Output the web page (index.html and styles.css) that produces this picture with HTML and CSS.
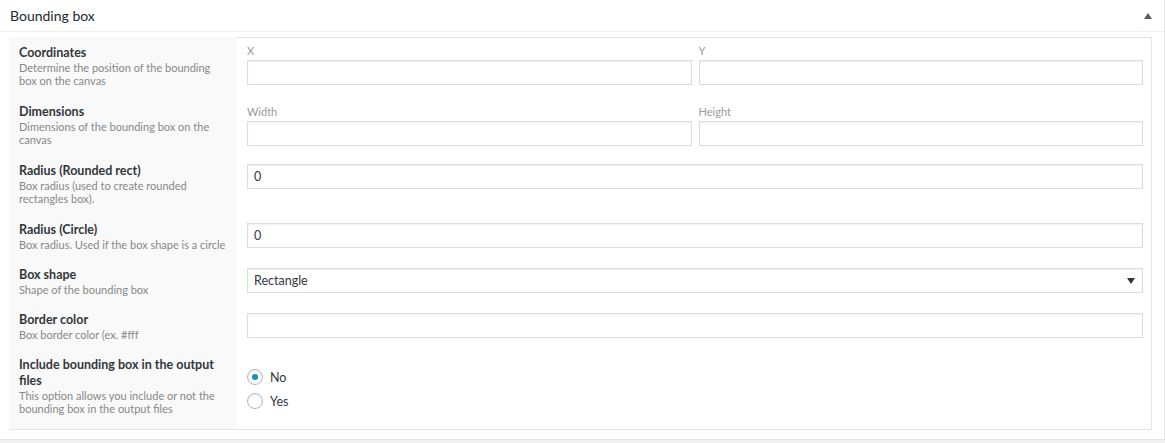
FILE: index.html
```html
<!DOCTYPE html>
<html lang="en">
<head>
    <meta charset="UTF-8">
    <title>Bounding box</title>
    <link rel="stylesheet" href="styles.css">
</head>
<body>
    <div class="postbox">
        <div class="postbox_header">
            <h2>Bounding box</h2>
            <span class="toggle_arrow"></span>
        </div>
        <div class="inside">
            <div class="settings">
                <div class="row tall">
                    <div class="row_label">
                        <div class="title">Coordinates</div>
                        <div class="desc">Determine the position of the bounding box on the canvas</div>
                    </div>
                    <div class="row_field">
                        <div class="pair">
                            <div class="sub_field">
                                <label>X</label>
                                <input type="text">
                            </div>
                            <div class="sub_field">
                                <label>Y</label>
                                <input type="text">
                            </div>
                        </div>
                    </div>
                </div>
                <div class="row tall">
                    <div class="row_label">
                        <div class="title">Dimensions</div>
                        <div class="desc">Dimensions of the bounding box on the canvas</div>
                    </div>
                    <div class="row_field">
                        <div class="pair">
                            <div class="sub_field">
                                <label>Width</label>
                                <input type="text">
                            </div>
                            <div class="sub_field">
                                <label>Height</label>
                                <input type="text">
                            </div>
                        </div>
                    </div>
                </div>
                <div class="row tall">
                    <div class="row_label">
                        <div class="title">Radius (Rounded rect)</div>
                        <div class="desc">Box radius (used to create rounded rectangles box).</div>
                    </div>
                    <div class="row_field">
                        <input type="text" value="0">
                    </div>
                </div>
                <div class="row">
                    <div class="row_label">
                        <div class="title">Radius (Circle)</div>
                        <div class="desc">Box radius. Used if the box shape is a circle</div>
                    </div>
                    <div class="row_field">
                        <input type="text" value="0">
                    </div>
                </div>
                <div class="row">
                    <div class="row_label">
                        <div class="title">Box shape</div>
                        <div class="desc">Shape of the bounding box</div>
                    </div>
                    <div class="row_field">
                        <div class="select_box">
                            <span>Rectangle</span>
                            <span class="select_arrow"></span>
                        </div>
                    </div>
                </div>
                <div class="row">
                    <div class="row_label">
                        <div class="title">Border color</div>
                        <div class="desc">Box border color (ex. #fff</div>
                    </div>
                    <div class="row_field">
                        <input type="text">
                    </div>
                </div>
                <div class="row last">
                    <div class="row_label">
                        <div class="title">Include bounding box in the output files</div>
                        <div class="desc">This option allows you include or not the bounding box in the output files</div>
                    </div>
                    <div class="row_field radios">
                        <label class="radio"><span class="radio_dot checked"></span>No</label>
                        <label class="radio"><span class="radio_dot"></span>Yes</label>
                    </div>
                </div>
            </div>
        </div>
    </div>
</body>
</html>
```

FILE: styles.css
```css
* {
    margin: 0;
    padding: 0;
    box-sizing: border-box;
}

body {
    background-color: #f1f1f1;
    font-family: Lato, "Open Sans", sans-serif;
    color: #23282d;
}

.postbox {
    width: 1165px;
    height: 440px;
    background-color: #fff;
    border-right: 1px solid #e5e5e5;
    border-bottom: 1px solid #e5e5e5;
}

.postbox_header {
    height: 32px;
    padding: 0 10px;
    display: flex;
    align-items: center;
    justify-content: space-between;
    border-bottom: 1px solid #eee;
}

.postbox_header h2 {
    font-size: 14px;
    font-weight: normal;
    color: #23282d;
}

.toggle_arrow {
    width: 0;
    height: 0;
    margin-right: 2px;
    border-left: 4px solid transparent;
    border-right: 4px solid transparent;
    border-bottom: 6px solid #555d66;
}

.inside {
    padding: 5px 12px 0 9px;
}

.settings {
    display: flex;
    flex-direction: column;
    border-right: 1px solid #e5e5e5;
    border-bottom: 1px solid #e5e5e5;
    background: linear-gradient(to right, #f9f9f9 228px, #fff 228px);
}

.row {
    display: grid;
    grid-template-columns: 228px 1fr;
    min-height: 45px;
}

.row.tall {
    min-height: 59px;
}

.row:first-child .row_field {
    border-top: 1px solid #e5e5e5;
}

.row_label {
    padding: 8px 8px 8px 10px;
}

.title {
    font-size: 12.5px;
    font-weight: bold;
    line-height: 16px;
    color: #32373c;
}

.desc {
    font-size: 11px;
    line-height: 13px;
    color: #888;
}

.row_field {
    padding: 9px 8px 0 10px;
}

.pair {
    display: flex;
    gap: 7px;
}

.sub_field {
    flex: 1;
    display: flex;
    flex-direction: column;
}

.sub_field label {
    font-size: 11px;
    line-height: 13px;
    color: #999;
    margin-bottom: 3px;
}

.row:first-child .row_field {
    padding-top: 6px;
}

input[type="text"] {
    width: 100%;
    height: 25px;
    border: 1px solid #ddd;
    box-shadow: inset 0 1px 2px rgba(0, 0, 0, 0.07);
    padding: 0 6px;
    font-family: inherit;
    font-size: 12.5px;
    color: #32373c;
    background-color: #fff;
    outline: none;
}

.select_box {
    height: 25px;
    border: 1px solid #ddd;
    box-shadow: inset 0 1px 2px rgba(0, 0, 0, 0.07);
    padding: 0 6px;
    display: flex;
    align-items: center;
    justify-content: space-between;
    font-size: 12.5px;
    color: #32373c;
}

.select_arrow {
    width: 0;
    height: 0;
    margin-right: 1px;
    border-left: 4px solid transparent;
    border-right: 4px solid transparent;
    border-top: 6px solid #32373c;
}

.row.last {
    min-height: 80px;
}

.radios {
    display: flex;
    flex-direction: column;
    justify-content: center;
    gap: 8px;
    padding-top: 0;
}

.radio {
    display: flex;
    align-items: center;
    gap: 7px;
    font-size: 12.5px;
    color: #32373c;
}

.radio_dot {
    width: 16px;
    height: 16px;
    border: 1px solid #b4b9be;
    border-radius: 50%;
    box-shadow: inset 0 1px 2px rgba(0, 0, 0, 0.1);
    display: flex;
    align-items: center;
    justify-content: center;
}

.radio_dot.checked::before {
    content: "";
    width: 6px;
    height: 6px;
    border-radius: 50%;
    background-color: #1e8cbe;
}
```
